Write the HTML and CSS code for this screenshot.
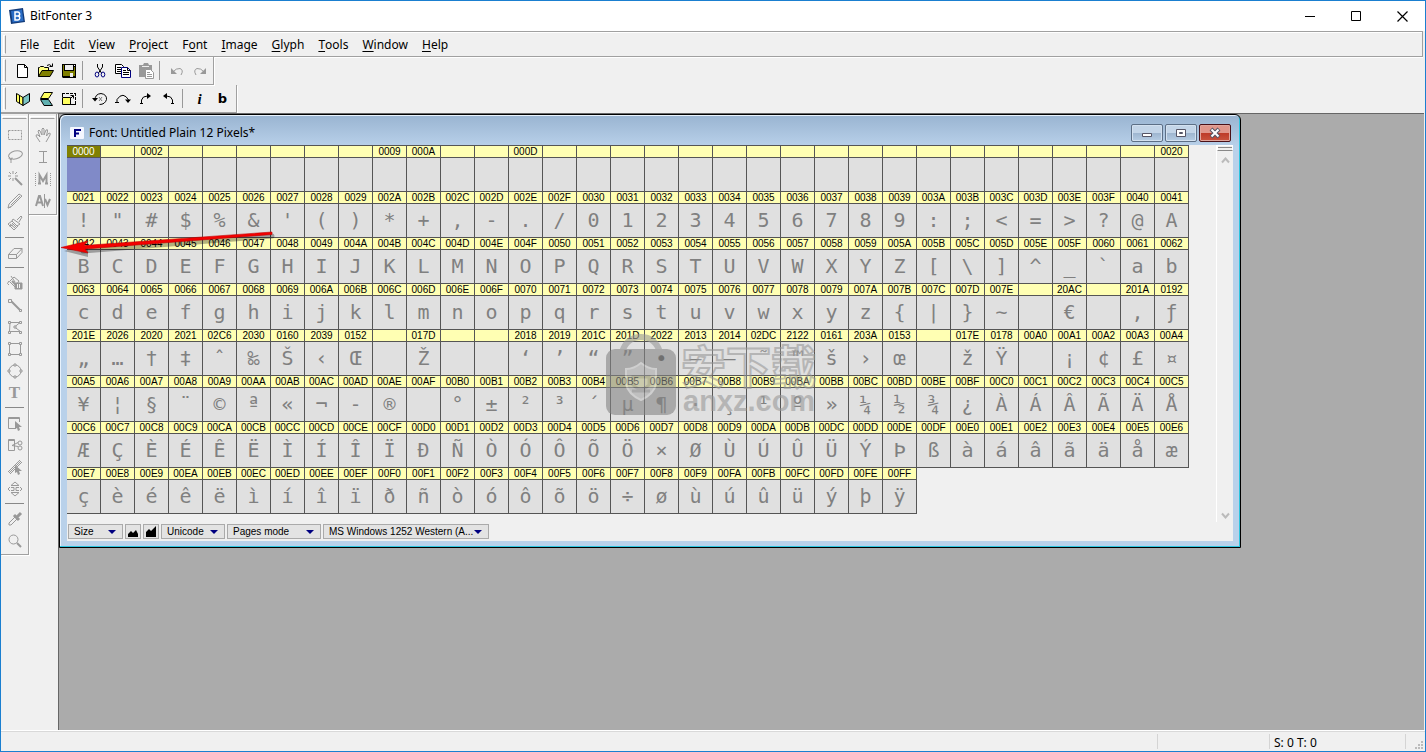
FILE: index.html
```html
<!DOCTYPE html>
<html lang="en">
<head>
<meta charset="utf-8">
<title>BitFonter 3</title>
<link rel="stylesheet" href="styles.css">
</head>
<body>
<div class="app">
  <header class="titlebar">
    <svg class="app-icon" viewBox="0 0 16 16"><path d="M0 2 14 0 16 14 2 16Z" fill="#123a78"/><path d="M2 3 13 1.500 14.500 13 3.500 14.500Z" fill="#2a6cc4"/><path d="M6 4v8h2.500a2 2 0 0 0 .5-4 2 2 0 0 0-.8-4Z M6 8h3" fill="none" stroke="#fff" stroke-width="1.500"/></svg>
    <h1 class="app-title">BitFonter 3</h1>
    <div class="caption-buttons">
      <button aria-label="Minimize"><svg viewBox="0 0 11 11"><path d="M0 5.500h10" stroke="#000"/></svg></button>
      <button aria-label="Maximize"><svg viewBox="0 0 11 11"><path d="M.5.5h9v9h-9Z" fill="none" stroke="#000"/></svg></button>
      <button aria-label="Close"><svg viewBox="0 0 11 11"><path d="M.5.5l10 10M10.500.5l-10 10" stroke="#000" stroke-width="1.200"/></svg></button>
    </div>
  </header>

  <nav class="menubar">
    <span class="grip"></span>
    <button><u>F</u>ile</button><button><u>E</u>dit</button><button><u>V</u>iew</button><button><u>P</u>roject</button><button>F<u>o</u>nt</button><button><u>I</u>mage</button><button><u>G</u>lyph</button><button><u>T</u>ools</button><button><u>W</u>indow</button><button><u>H</u>elp</button>
  </nav>

  <div class="toolbar" role="toolbar" aria-label="Standard">
    <span class="grip"></span>
    <button aria-label="New"><svg viewBox="0 0 16 16"><path d="M2.500 1.500h7l3 3v10h-10Z" fill="#fff" stroke="#000"/><path d="M9.500 1.500v3h3" fill="none" stroke="#000"/></svg></button>
    <button aria-label="Open"><svg viewBox="0 0 16 16"><path d="M.5 13.500v-9h1l1-1h3l1 1h4v3" fill="#ffff80" stroke="#000"/><path d="M.5 13.500 4 7.500h11.500l-3.500 6Z" fill="#808000" stroke="#000"/><path d="M9 2.500q2.500-2 4.500.5M14.500.5v3h-3" fill="none" stroke="#000"/></svg></button>
    <button aria-label="Save"><svg viewBox="0 0 16 16"><path d="M1 1h14v14H2l-1-1Z"/><path d="M2 2h1v6h10V4h1v9H2Z" fill="#808000"/><path d="M4 2h8v5H4Z" fill="#eee"/><path d="M9 10h3v4H9Z" fill="#eee"/><path d="M13 2h1v1h-1Z" fill="#fff"/></svg></button>
    <span class="sep"></span>
    <button aria-label="Cut"><svg viewBox="0 0 16 16"><path d="M5.500 1v3l4 6M10.500 1v3l-4 6" fill="none" stroke="#000"/><ellipse cx="5" cy="11.500" rx="1.800" ry="2.500" fill="none" stroke="#000080"/><ellipse cx="11" cy="11.500" rx="1.800" ry="2.500" fill="none" stroke="#000080"/></svg></button>
    <button aria-label="Copy"><svg viewBox="0 0 16 16"><path d="M.5 1.500h6l2 2v7h-8Z" fill="#fff" stroke="#000"/><path d="M2 4.500h4M2 6.500h5M2 8.500h5" stroke="#000"/><path d="M6.500 4.500h6l3 3v7h-9Z" fill="#fff" stroke="#000080"/><path d="M12.500 4.500v3h3M8 7.500h3M8 9.500h6M8 11.500h6" fill="none" stroke="#000"/></svg></button>
    <button aria-label="Paste"><svg viewBox="0 0 16 16"><path d="M1 2h4l1-2h4l1 2h3v12H1Z" fill="#999"/><path d="M4 3.500h7" stroke="#eee"/><path d="M7.500 6.500h5l3 3v6h-8Z" fill="#fff" stroke="#999"/><path d="M9 9.500h3M9 11.500h5M9 13.500h5" stroke="#999"/></svg></button>
    <span class="sep"></span>
    <button aria-label="Undo"><svg viewBox="0 0 16 16" fill="none" stroke="#999"><path d="M4 9q3-4 7-3.500Q15 7 12 12"/><path d="M2 5v6h6Z" fill="#999" stroke="none"/></svg></button>
    <button aria-label="Redo"><svg viewBox="0 0 16 16" fill="none" stroke="#999"><path d="M12 9Q9 5 5 5.500 1 7 4 12"/><path d="M14 5v6H8Z" fill="#999" stroke="none"/></svg></button>
  </div>

  <div class="toolbar" role="toolbar" aria-label="Transform">
    <span class="grip"></span>
    <button aria-label="Flip horizontal"><svg viewBox="0 0 16 16"><path d="M1.500 2.500 8 6.500v8L1.500 10.500Z" fill="#ffff60" stroke="#000"/><path d="M14.500 2.500 8 6.500v8l6.500-4Z" fill="#7cc4c4" stroke="#000"/><path d="M4.500 4.500v8" stroke="#000"/></svg></button>
    <button aria-label="Flip vertical"><svg viewBox="0 0 16 16"><path d="M6 1.500h8.500L10.500 7.500h-8Z" fill="#ffff60" stroke="#000"/><path d="M2.500 8.500h8l4 6H6Z" fill="#60b0b0" stroke="#000"/></svg></button>
    <button aria-label="Scale"><svg viewBox="0 0 16 16"><path d="M1 2.500h14M14.500 2v12M1.500 3v3" fill="none" stroke="#000" stroke-dasharray="3 1"/><path d="M1.500 6.500h8v7h-8Z" fill="#ffff60" stroke="#000"/><path d="M9 13.500h6M9 8l3-3M9.500 4.500h3v3" fill="none" stroke="#000"/></svg></button>
    <span class="sep"></span>
    <button aria-label="Rotate free"><svg viewBox="0 0 16 16" fill="none" stroke="#000"><path d="M3 9Q3 3 9 2.500q6 1 5.500 6-1.500 5-7 5"/><path d="M0 7h6l-3 3.500Z" fill="#000" stroke="none"/><path d="M7 6l3 4M10 6l-3 4" stroke="#777"/></svg></button>
    <button aria-label="Rotate 180"><svg viewBox="0 0 16 16" fill="none" stroke="#000"><path d="M2 11.500V8.500q6-9 12 1"/><path d="M0 11.500h4"/><path d="M10 8.500h6l-3 3.500Z" fill="#000" stroke="none"/></svg></button>
    <button aria-label="Rotate right"><svg viewBox="0 0 16 16" fill="none" stroke="#000"><path d="M3.500 13V9q1-4 6-4M2 12.500h3"/><path d="M9 2v6l4-3Z" fill="#000" stroke="none"/></svg></button>
    <button aria-label="Rotate left"><svg viewBox="0 0 16 16" fill="none" stroke="#000"><path d="M11.500 13V9q-1-4-6-4M10 12.500h3"/><path d="M6 2v6L2 5Z" fill="#000" stroke="none"/></svg></button>
    <span class="sep"></span>
    <button aria-label="Italic"><i class="letter">i</i></button>
    <button aria-label="Bold"><b class="letter upright">b</b></button>
  </div>

  <main class="main">
    <aside class="side">
      <div class="palette" role="toolbar" aria-label="Drawing tools">
        <span class="grip-h"></span>
        <button aria-label="Select"><svg viewBox="0 0 16 16"><path d="M1.500 3.500h13v9h-13Z" stroke-dasharray="2 1"/></svg></button>
        <button aria-label="Lasso"><svg viewBox="0 0 16 16"><ellipse cx="8.500" cy="6" rx="7" ry="4" transform="rotate(-14 8 6)"/><path d="M3 8q-2 1 0 2.500 3 0 2-2M4 10v4"/></svg></button>
        <button aria-label="Magic wand"><svg viewBox="0 0 16 16"><path d="M6 0v3M6 7v3M1 5h3M8 5h3M2 1l2 2M10 1 8 3M2 9l2-2"/><path d="M8 7l7 7" stroke-width="2"/></svg></button>
        <button aria-label="Pencil"><svg viewBox="0 0 16 16"><path d="M1 15l1-4L12 1l3 2L5 13Z"/><path d="M4 12l9-9M1 15l3-1"/></svg></button>
        <button aria-label="Brush"><svg viewBox="0 0 16 16"><path d="M10 5l4-4 1 1-3 5M6 4l7 5-3 2-5-5Z"/><path d="M5 6 1 9l6 6 4-4M3 9l5 4M5 8l4 4M2 11l4-1"/></svg></button>
        <span class="sep-h"></span>
        <button aria-label="Eraser"><svg viewBox="0 0 16 16"><path d="M1.500 9.500 7 3.500h8L9.500 9.500ZM1.500 9.500v4h8v-4M9.500 13.500l5.500-6v-4"/></svg></button>
        <span class="sep-h"></span>
        <button aria-label="Fill"><svg viewBox="0 0 16 16"><path d="M2.500 6.500 7 2l5 4-4 6ZM2 6q-3 3 0 4M4 1l4 6"/><path d="M5 6l4 4" stroke-width="2"/><path d="M8 8h7v6H8Z" fill="#999"/><path d="M10.500 9v4M12.500 9v4" stroke="#f0f0f0"/></svg></button>
        <button aria-label="Line"><svg viewBox="0 0 16 16"><path d="M4 4l9 9" stroke-width="2"/><path d="M1.500 2.500h3v3h-3ZM12.500 12.500h2v2h-2Z" fill="#f0f0f0"/></svg></button>
        <button aria-label="Polygon"><svg viewBox="0 0 16 16"><path d="M3 3.500h10L7.500 8l6 4.500H2.500Z"/><path d="M1.500 2.500h2v2h-2ZM12.500 2.500h2v2h-2ZM7 7h2v2H7ZM1.500 12.500h2v2h-2ZM12.500 12.500h2v2h-2Z" fill="#f0f0f0"/></svg></button>
        <button aria-label="Rectangle"><svg viewBox="0 0 16 16"><path d="M2.500 2.500h11v11h-11Z"/><path d="M1.500 1.500h2v2h-2ZM12.500 1.500h2v2h-2ZM1.500 12.500h2v2h-2ZM12.500 12.500h2v2h-2Z" fill="#f0f0f0"/></svg></button>
        <button aria-label="Ellipse"><svg viewBox="0 0 16 16"><circle cx="8" cy="8" r="6"/><path d="M7 1h2v2H7ZM7 13h2v2H7ZM1 7h2v2H1ZM13 7h2v2h-2Z" fill="#f0f0f0"/></svg></button>
        <button aria-label="Text"><span class="serif-t">T</span></button>
        <span class="sep-h"></span>
        <button aria-label="Select object"><svg viewBox="0 0 16 16"><path d="M9 13.500H1.500v-11h11V7M1 3.500h12"/><path d="M8 6v8l2-1 1 3 2-1-1-3h3Z" fill="#999" stroke="none"/></svg></button>
        <button aria-label="Cut object"><svg viewBox="0 0 16 16"><path d="M1.500 2.500h6v11h-6ZM1 3.500h7M5 8.500l6 1M5 8.500l6-3"/><circle cx="13" cy="6" r="2"/><circle cx="13" cy="11" r="2"/></svg></button>
        <button aria-label="Edit line"><svg viewBox="0 0 16 16"><path d="M1 13 13 1M3 15 15 3M2 14 14 2"/><path d="M8 6v8l2-1 1 3 2-1-1-3h3Z" fill="#999" stroke="none"/></svg></button>
        <button aria-label="Shift"><svg viewBox="0 0 16 16"><path d="M4 4.500 8 1l4 3.500ZM4 11.500 8 15l4-3.500ZM1 8l2-2M1 8l2 2M15 8l-2-2M15 8l-2 2M4 6.500h3v3H4M12 6.500H9v3h3"/></svg></button>
        <span class="sep-h"></span>
        <button aria-label="Color picker"><svg viewBox="0 0 16 16"><path d="M2 14v-2l6-6 2 2-6 6Z"/><path d="M7 4l5 5M10 6l4-4" stroke-width="3"/></svg></button>
        <button aria-label="Zoom"><svg viewBox="0 0 16 16"><circle cx="6.500" cy="6.500" r="4.500"/><path d="M10 10l4 4" stroke-width="2"/></svg></button>
      </div>
      <div class="palette" role="toolbar" aria-label="View tools">
        <span class="grip-h"></span>
        <button aria-label="Hand"><svg viewBox="0 0 16 16"><path d="M5 15 1 9q0-2 2-1l2 2L3 4q1-2 2 0l2 4V2q1-2 2 0v6l2-5q2-1 1.500 1L11.500 9 14 6q2 0 1 2l-4 7"/></svg></button>
        <button aria-label="Guide"><svg viewBox="0 0 16 16"><path d="M4 2.500h8M4 13.500h8M8.500 3v10"/></svg></button>
        <button aria-label="Metrics"><svg viewBox="0 0 16 16"><path d="M.5 2v13M15.500 2v13" stroke-dasharray="1 1"/><path d="M4.500 13V4L8 10l3.500-6v9M3 12.500h3M10 12.500h3" stroke-width="2"/></svg></button>
        <button aria-label="Kerning"><svg viewBox="0 0 16 16"><path d="M1 13 4 3h1l3 10M2 9.500h5M10 6l2.500 6L15 6" stroke-width="2"/><path d="M9.500 1v14"/></svg></button>
      </div>
    </aside>

    <section class="workspace">
      <article class="child">
        <header class="child-title">
          <svg class="font-icon" viewBox="0 0 14 12"><rect width="14" height="12" rx="1" fill="#f4f7ff"/><path d="M5 10V3h6M5 6.500h4" fill="none" stroke="#000080" stroke-width="2"/></svg>
          <h2>Font: Untitled Plain 12 Pixels*</h2>
          <button class="glass" aria-label="Minimize window"><svg viewBox="0 0 14 12"><path d="M2.500 6.500h9v3h-9Z" fill="#fff" stroke="#556"/></svg></button>
          <button class="glass" aria-label="Restore window"><svg viewBox="0 0 14 12"><path d="M2.500 2.500h9v7h-9Z" fill="#fff" stroke="#556"/><path d="M5.500 5.500h3v1h-3Z" fill="none" stroke="#556"/></svg></button>
          <button class="glass close" aria-label="Close window"><svg viewBox="0 0 14 12"><path d="M3 2l8 8M11 2l-8 8" stroke="#556" stroke-width="4"/><path d="M3.500 2.500l7 7M10.500 2.500l-7 7" stroke="#fff" stroke-width="2"/></svg></button>
        </header>
        <div class="child-body">
          <div class="chart">
            <table class="glyphs" aria-label="Glyph table"><tbody id="glyph-rows"></tbody></table>
            <div class="scroll">
              <span class="split"></span>
              <svg viewBox="0 0 9 7"><path d="M1 5.500l3.500-4 3.500 4" /></svg>
              <svg class="down" viewBox="0 0 9 7"><path d="M1 1.500l3.500 4 3.500-4" /></svg>
            </div>
          </div>
          <footer class="options">
            <label class="pick size"><select aria-label="Size"><option>Size</option></select></label>
            <button class="hill" aria-label="Smaller"><svg viewBox="0 0 12 12"><path d="M1 11V8l3-3 2 2 3-3 2 4v3Z"/></svg></button>
            <button class="hill" aria-label="Larger"><svg viewBox="0 0 12 12"><path d="M1 11V6l3-3 2 2 5-5v11Z"/></svg></button>
            <label class="pick code"><select aria-label="Encoding"><option>Unicode</option></select></label>
            <label class="pick mode"><select aria-label="Mode"><option>Pages mode</option></select></label>
            <label class="pick page"><select aria-label="Code page"><option>MS Windows 1252 Western (A...</option></select></label>
          </footer>
        </div>
      </article>

      <svg class="mark" viewBox="0 0 216 84">
        <path d="M17 18q5-15 19-15t19 15" fill="none" stroke="#999" stroke-width="6"/>
        <rect x="1" y="15" width="70" height="66" rx="9" fill="#858585"/>
        <path d="M36 29q7 6 15 6v15q-2 10-15 16-13-6-15-16V35q8 0 15-6Z" fill="#aaa" stroke="#c4c4c4" stroke-width="2"/>
        <path d="M28 43h16v8q-8 8-16 0ZM27 57h18" fill="none" stroke="#858585" stroke-width="3"/>
        <circle cx="56" cy="24" r="3" fill="#666"/>
        <text class="mark-cn" x="76" y="50">安下载</text>
        <text class="mark-url" x="78" y="77">anxz.com</text>
      </svg>
      <svg class="arrow" viewBox="0 0 220 32">
        <path d="M24 20 213 5" stroke="#000" stroke-opacity=".3" stroke-width="5" stroke-linecap="round"/>
        <path d="M5 20 29 14v12Z" opacity=".3"/>
        <path d="M2 16.500 29 10l-4 4.500L213 1v2.500L26 18l3 4Z" fill="#f40000" stroke="#c00000" stroke-width=".6"/>
      </svg>
    </section>
  </main>

  <footer class="status"><span class="pane grow"></span><span class="pane mid"></span><span class="pane coords">S: 0 T: 0</span>
    <span class="pane corner"><svg viewBox="0 0 8 8"><path d="M6 0h2v2H6ZM3 3h2v2H3ZM6 3h2v2H6ZM0 6h2v2H0ZM3 6h2v2H3ZM6 6h2v2H6Z" fill="#bbb"/></svg></span>
  </footer>
</div>
<script src="app.js"></script>
</body>
</html>
```
FILE: app.js
```js
const COLUMNS = 33;

const hex = n => n.toString(16).toUpperCase().padStart(4, "0");
const range = (from, to) => Array.from({ length: to - from + 1 }, (_, i) => hex(from + i));

const control = Array(COLUMNS).fill("");
Object.assign(control, { 0: "0000", 2: "0002", 9: "0009", 10: "000A", 13: "000D", 32: "0020" });

const windows1252 = "20AC - 201A 0192 201E 2026 2020 2021 02C6 2030 0160 2039 0152 - 017D - - 2018 2019 201C 201D 2022 2013 2014 02DC 2122 0161 203A 0153 - 017E 0178"
  .split(" ").map(c => (c === "-" ? "" : c));

const codes = [...control, ...range(0x21, 0x7e), "", ...windows1252, ...range(0xa0, 0xff)];

const EMPTY_GLYPHS = [0xa0, 0xaf];

const glyphFor = code => {
  const n = parseInt(code, 16);
  if (!code || n <= 0x20 || EMPTY_GLYPHS.includes(n)) return "";
  return n === 0xad ? "-" : String.fromCharCode(n);
};

const body = document.getElementById("glyph-rows");
for (let start = 0; start < codes.length; start += COLUMNS) {
  const slice = codes.slice(start, start + COLUMNS);
  const head = body.insertRow();
  const row = body.insertRow();
  slice.forEach((code, i) => {
    const th = document.createElement("th");
    th.textContent = code;
    head.append(th);
    const td = row.insertCell();
    td.textContent = glyphFor(code);
    if (start + i === 0) {
      th.className = "selected";
      td.className = "selected";
    }
  });
}
```
FILE: styles.css
```css
* { box-sizing: border-box; }
body { margin: 0; font: 12px/16px "Noto Sans", "Open Sans", sans-serif; color: #000; }
button { margin: 0; padding: 0; border: 0; background: none; font: inherit; color: inherit; display: flex; align-items: center; justify-content: center; }
h1, h2 { margin: 0; font-size: 12px; font-weight: 400; }

.app { height: 100vh; display: flex; flex-direction: column; border: 1px solid #1a7fd0; background: #f0f0f0; overflow: hidden; }

.titlebar { height: 30px; flex: none; display: flex; align-items: center; padding-left: 8px; background: #fff; }
.app-icon { width: 16px; height: 16px; margin-right: 5px; }
.app-title { flex: 1; }
.caption-buttons { display: flex; }
.caption-buttons button { width: 46px; height: 30px; }
.caption-buttons svg { width: 11px; height: 11px; }

.grip { align-self: stretch; width: 3px; margin: 2px 0; border: 1px solid #fff; border-right-color: #a0a0a0; }
.menubar { height: 26px; flex: none; display: flex; align-items: center; gap: 14px; margin-right: 2px; padding: 1px 0 0 2px; border: solid #a0a0a0; border-width: 1px 1px 1px 0; box-shadow: inset 0 1px #fff, 0 1px #fff; }
.menubar u { text-underline-offset: 2px; }

.toolbar { height: 28px; flex: none; align-self: flex-start; display: flex; align-items: center; padding: 0 2px; border: solid #a0a0a0; border-width: 0 1px 1px 0; box-shadow: 1px 1px #fff; }
.toolbar .grip { margin-right: 5px; }
.toolbar button { width: 23px; height: 24px; }
.toolbar svg { width: 16px; height: 16px; }
.sep { width: 1px; height: 19px; margin: 0 5px 0 2px; background: #999; }
.letter { font: italic bold 15px/16px "Liberation Serif", serif; }
.upright { font: bold 13px/16px "DejaVu Sans", sans-serif; }

.main { flex: 1; min-height: 0; display: flex; }
.side { width: 57px; flex: none; display: flex; align-items: flex-start; border-top: 1px solid #a0a0a0; }
.palette { width: 28px; flex: none; display: flex; flex-direction: column; align-items: center; padding: 2px 1px; border: solid #a0a0a0; border-width: 0 1px 1px 0; box-shadow: 1px 1px #fff; }
.grip-h { align-self: stretch; height: 3px; margin-bottom: 5px; border: 1px solid #fff; border-bottom-color: #a0a0a0; }
.palette button { width: 22px; height: 22px; color: #999; }
.palette svg { width: 16px; height: 16px; fill: none; stroke: #999; }
.sep-h { width: 19px; height: 1px; margin: 3px 0 4px; background: #888; }
.serif-t { font: bold 17px/20px "Liberation Serif", serif; }

.workspace { position: relative; flex: 1; min-width: 0; overflow: hidden; margin-right: 1px; background: #ababab; border: solid #666; border-width: 1px 0 0 1px; }
.child { position: absolute; left: 0; top: 0; padding: 0 7px 6px; background: linear-gradient(#99b4d1, #b9d1ea 32px); border: 1px solid #000; border-radius: 6px 6px 0 0; box-shadow: inset -1px -1px #2cc5df, inset 1px 1px #e8f2fc; }
.child-title { height: 30px; display: flex; align-items: center; gap: 2px; padding: 6px 2px 0 3px; }
.child-title h2 { flex: 1; }
.font-icon { width: 14px; height: 12px; margin-right: 3px; }
.glass { width: 32px; height: 18px; border: 1px solid #5c6f86; border-radius: 2px; box-shadow: inset 0 0 0 1px #d3e1f0; background: linear-gradient(#c3d5e8 48%, #9db5cf 50%, #b6cde4); }
.glass svg { width: 14px; height: 12px; }
.glass.close { border-color: #4a1118; box-shadow: inset 0 0 0 1px #e0a59c; background: linear-gradient(#e0968b 48%, #bd3a28 50%, #c9543f); }

.child-body { background: #f0f0f0; }
.chart { display: flex; }
.glyphs { table-layout: fixed; border-spacing: 0; border-top: 1px solid #555; }
.glyphs th, .glyphs td { width: 34px; min-width: 34px; padding: 0; border: solid #555; border-width: 0 1px 1px 0; text-align: center; white-space: nowrap; overflow: hidden; }
.glyphs th { height: 12px; background: #ffffb3; font: 10px/11px "Liberation Sans", Arial, sans-serif; }
.glyphs td { height: 34px; background: #e0e0e0; color: #808080; font: 20px/33px "DejaVu Sans Mono", monospace; }
.glyphs th.selected { background: #808000; color: #fff; }
.glyphs td.selected { background: #808ac8; }

.scroll { width: 17px; margin-left: 27px; display: flex; flex-direction: column; align-items: center; border-left: 1px solid #fff; margin-bottom: -8px; }
.split { align-self: stretch; height: 6px; margin-bottom: 6px; border: 1px solid #fff; border-bottom-color: #888; background: linear-gradient(#f0f0f0 1px, #888 1px, #888 2px, #f0f0f0 2px); }
.scroll svg { width: 9px; height: 7px; fill: none; stroke: #bbb; stroke-width: 2; }
.scroll .down { margin-top: auto; margin-bottom: 3px; }

.options { display: flex; align-items: center; gap: 2px; padding: 10px 1px 2px; }
.pick { position: relative; display: flex; height: 15px; border: 1px solid #aaa; background: #e3e3e3; }
.pick::after { content: ""; position: absolute; right: 6px; top: 5px; border: 4px solid transparent; border-top-color: #000080; border-bottom: 0; pointer-events: none; }
.pick select { appearance: none; width: 100%; height: 13px; padding: 0 0 0 5px; border: 0; border-radius: 0; background: none; color: #000; font: 10px/13px "Liberation Sans", Arial, sans-serif; }
.size { width: 55px; }
.code { width: 64px; }
.mode { width: 94px; }
.page { width: 166px; }
.hill { width: 16px; height: 15px; border: 1px solid #aaa; background: #e3e3e3; }
.hill svg { width: 12px; height: 12px; }

.mark { position: absolute; left: 546px; top: 220px; width: 216px; height: 84px; opacity: .6; pointer-events: none; }
.mark-cn { font: 700 45px "Noto Sans CJK SC", sans-serif; fill: #e2e2e2; fill-opacity: .4; stroke: #999; stroke-width: 2; }
.mark-url { font: 700 29px "Liberation Sans", Arial, sans-serif; fill: #999; }
.arrow { position: absolute; left: 0; top: 117px; width: 220px; height: 32px; pointer-events: none; }

.status { height: 20px; flex: none; display: flex; margin-top: 1px; border-top: 1px solid #d9d9d9; box-shadow: 0 -1px #fff; }
.pane { margin: 2px 0; border-right: 1px solid #d4d4d4; }
.grow { flex: 1; }
.mid { width: 112px; }
.coords { width: 136px; padding: 1px 0 0 4px; }
.corner { width: 19px; display: flex; align-items: flex-end; justify-content: flex-end; padding-right: 2px; border: 0; }
.corner svg { width: 8px; height: 8px; }
```
